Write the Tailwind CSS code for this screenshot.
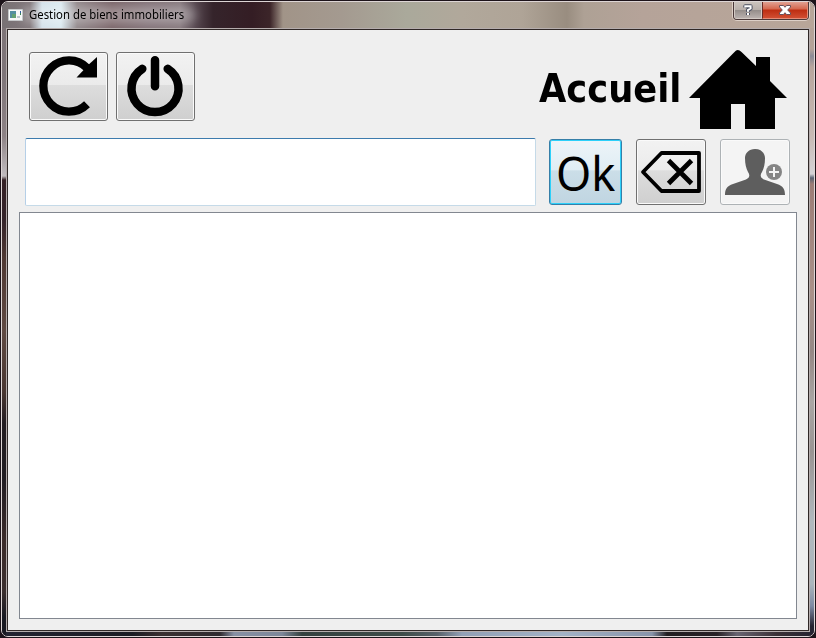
<!DOCTYPE html>
<html lang="fr"><head><meta charset="utf-8"><title>Gestion de biens immobiliers</title>
<script src="https://cdn.jsdelivr.net/npm/@tailwindcss/browser@4"></script></head>
<body class="w-[816px] h-[638px] overflow-hidden bg-[#150c12]">
<div class="w-[816px] h-[638px] bg-[#1d131a] p-px">
<div class="relative w-[814px] h-[636px] rounded-[7px] border border-[#ddd5d5] overflow-hidden bg-[#251c25] flex flex-col">
  <div class="absolute left-0 bottom-0 h-1 w-full bg-[linear-gradient(90deg,#242432_0,#1b1c24_130px,#3a3031_160px,#302b30_218px,#8790a4_232px,#7d8799_280px,#34413f_300px,#3f4c49_400px,#58616a_435px,#92a0b6_460px,#a3b2c6_560px,#8894aa_650px,#231e22_665px,#282126_715px,#686471_735px,#3a3036_775px,#252331_812px)]"></div>
  <div class="absolute left-0 top-0 w-1 h-full bg-[linear-gradient(180deg,#7d7376_0,#7e7579_73px,#8d8285_134px,#c1bcbf_174px,#352125_178px,#35242a_218px,#4f3833_256px,#604a43_329px,#493631_390px,#241d22_421px,#211c22_476px,#3b2b2a_537px,#3b2f2f_590px,#191922_615px)]"></div>
  <div class="absolute right-0 top-0 w-1 h-full bg-[linear-gradient(180deg,#b5a398_0,#b5a398_47px,#8b8b96_54px,#b8a69d_65px,#c8bab4_134px,#d4d3d6_172px,#596272_176px,#9c7d76_182px,#aa9189_290px,#958885_350px,#aaa6a4_400px,#999493_450px,#b0b9be_520px,#aab6bd_582px,#7d8aa3_604px,#252331_624px)]"></div>
  <header class="relative h-[26px] shrink-0 flex items-start bg-[linear-gradient(90deg,#787174_0,#81777b_28px,#d5e2eb_40px,#dbe9f0_59px,#91878a_75px,#7a6569_110px,#827278_145px,#85787d_178px,#55464e_194px,#35242b_211px,#341d24_250px,#3c2529_268px,#a19488_281px,#a49a90_340px,#aaa99b_405px,#b1a89b_460px,#afa497_520px,#998d80_565px,#aea195_582px,#b5a399_640px,#b8a699_812px)]">
    <div class="absolute left-5 top-[5px] h-4 w-[174px] rounded-full bg-white/30 blur-[5px]"></div>
    <svg class="absolute left-[6px] top-[7px]" width="15" height="12" viewBox="0 0 15 12"><path fill="#f7f8f8" stroke="#aeb4b9" stroke-width=".5" d="M.3.3h14.4v11.4H.3z"/><path fill="#538fa0" d="M2 2h6v7H2z"/><path fill="#62a073" d="M4 5h4v4H4z"/><path fill="#bbc6ce" d="M9 7h3v2H9z"/><path fill="#315aa0" d="M12 2h1v2h-1z"/><path fill="#3b8257" d="M12 4h1v2h-1z"/></svg>
    <h1 class="relative ml-[27px] mt-[5px] w-[160px] whitespace-nowrap font-['Noto_Sans',sans-serif] text-[12px] leading-[16px] text-black"><span class="inline-block origin-left scale-x-[0.945]">Gestion de biens immobiliers</span></h1>
    <div class="absolute right-[5px] -top-px flex h-[19px] w-[76px] overflow-hidden rounded-b-[4px] border border-t-0 border-[#4b3939] shadow-[0_0_0_1px_#ddd0c7]">
      <button class="flex w-7 justify-center border border-[#d2c9c4] bg-[linear-gradient(#cbc3bd_0,#b9b0ab_47%,#928b88_48%,#b9b0ad_100%)]"><svg class="shrink-0" width="12" height="15" viewBox="0 0 12 15" fill="none"><path d="M3.300 5.500V4.300h5.300v2.200L6 8v1.700M6 11v2" stroke="#4c5062" stroke-width="4" stroke-linejoin="round"/><path d="M3.3 5.5V4.3h5.3v2.2L6 8v1.700M6 11v2" stroke="#fff" stroke-width="2"/></svg></button>
      <button class="flex grow justify-center border border-l-[#6b2b24] border-[#e58b76] bg-[linear-gradient(#e1a192_0,#d4644a_46%,#bd2c10_48%,#d14e32_100%)]"><svg width="14" height="15" viewBox="0 0 14 15"><path d="M1.500 3.500h4L7 5.300l1.500-1.800h4v1.500L9.700 8l2.800 3v1.500h-4L7 10.700l-1.500 1.800h-4V11l2.800-3-2.800-3z" fill="#fff" stroke="#66505a" stroke-width="1"/></svg></button>
    </div>
  </header>
  <main class="relative ml-1 h-[604px] w-[804px] shrink-0 border border-[#b5adad] font-['Noto_Sans',sans-serif]">
   <div class="h-[602px] w-[802px] border border-[#302827] bg-[#efefef] flex flex-col">
    <div class="h-[108px] shrink-0 flex">
      <button class="ml-[21px] mt-[22px] w-[79px] h-[69px] rounded-[3px] border border-[#707070] bg-[linear-gradient(#f2f2f2_0,#ebebeb_47%,#dddddd_48%,#cfcfcf_100%)] shadow-[inset_0_0_0_1px_#fafafa]"><svg width="77" height="67" viewBox="0 0 77 67"><path d="M57.300 15.200A25.600 25.600 0 1 0 57 51.200" fill="none" stroke="#000" stroke-width="8.300"/><path d="M67 4v20.500H46.500L59.300 11z"/></svg></button>
      <button class="ml-2 mt-[22px] w-[79px] h-[69px] rounded-[3px] border border-[#707070] bg-[linear-gradient(#f2f2f2_0,#ebebeb_47%,#dddddd_48%,#cfcfcf_100%)] shadow-[inset_0_0_0_1px_#fafafa]"><svg width="77" height="67" viewBox="0 0 77 67" fill="none" stroke="#000" stroke-width="8.500" stroke-linecap="round"><path d="M38 7.300v26M25.300 15.800a23.500 23.500 0 1 0 25.400 0"/></svg></button>
      <h2 class="ml-[344px] mt-[31px] w-[150px] whitespace-nowrap font-['DejaVu_Sans',sans-serif] text-[39px] leading-[56px] font-bold"><span class="inline-block origin-left scale-x-[0.905]">Accueil</span></h2>
      <svg class="mt-[20px]" width="98" height="79" viewBox="0 0 98 79"><path d="m0 48 45.500-46q3-4 7 0L67 16V7h14v24l17 17H86v31H56V54H42v25H11V48z"/></svg>
    </div>
    <div class="h-[74px] shrink-0 flex items-start">
      <input class="ml-[17px] mt-0 w-[511px] h-[68px] rounded-[2px] border border-[#c5dae8] border-t-[#3d7bad] border-l-[#b5cfe7] bg-white outline-none">
      <button class="ml-[13px] mt-[1px] w-[73px] h-[66px] rounded-[3px] border border-[#367fa8] bg-[linear-gradient(#edf4f8_0,#e0edf4_47%,#cbdee8_48%,#c0d5e1_100%)] shadow-[inset_0_0_0_1px_#2cd0fa] text-[48px] leading-[64px]"><span class="inline-block translate-y-px scale-x-[0.94]">Ok</span></button>
      <button class="ml-[14px] mt-[1px] w-[70px] h-[66px] rounded-[3px] border border-[#707070] bg-[linear-gradient(#f2f2f2_0,#ebebeb_47%,#dddddd_48%,#cfcfcf_100%)] shadow-[inset_0_0_0_1px_#fafafa]"><svg width="68" height="64" viewBox="0 0 68 64" fill="none" stroke="#000"><path stroke-width="3.800" stroke-linejoin="round" d="M24.500 13H62v38H24.500L6 32z"/><path stroke-width="4.800" d="M31.500 20.500 54.500 43.500M54.500 20.500 31.500 43.500"/></svg></button>
      <button class="ml-[14px] mt-[1px] w-[70px] h-[66px] rounded-[3px] border border-[#adb2b5] bg-[#f4f4f4] shadow-[inset_0_0_0_1px_#fafafa]"><svg width="68" height="64" viewBox="0 0 68 64"><path fill="#5e5e5e" d="M4 55c0-6 2-9 8-11l13-4.500c4-2 4-4.500 2-7.500-2-4-3-8-3-14 0-5 4-9 10-9s10 4 10 9c0 6-1 10-3 14-2 3-2 5.500 2 7.500L56 44c6 2 8 5 8 11z"/><circle cx="53" cy="32" r="9" fill="#f4f4f4"/><circle cx="53" cy="32" r="8" fill="#858585"/><path fill="none" stroke="#f4f4f4" stroke-width="2" d="M53 27v10m-5-5h10"/></svg></button>
    </div>
    <div class="ml-[11px] h-[407px] w-[778px] border border-[#828790] bg-white"></div>
   </div>
  </main>
</div></div></body></html>
